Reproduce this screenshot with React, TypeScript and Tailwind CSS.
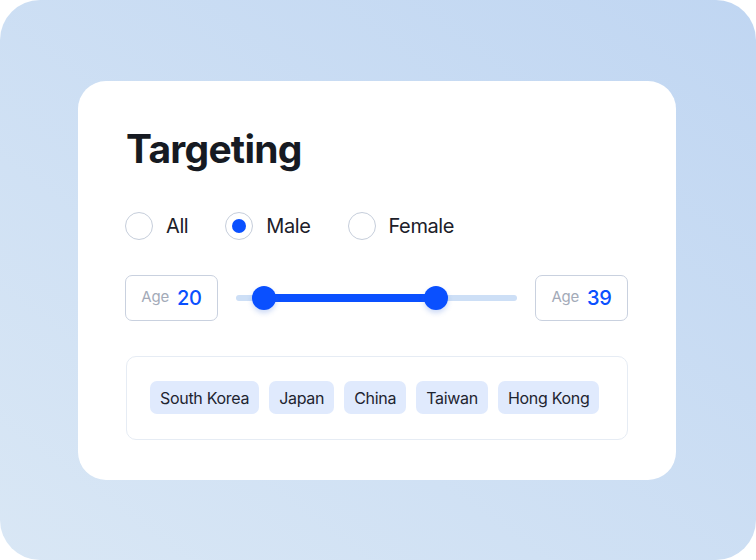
import React, { useState } from 'react';

const countries = ['South Korea', 'Japan', 'China', 'Taiwan', 'Hong Kong'];
const genders = ['All', 'Male', 'Female'];

const AgeBox: React.FC<{ value: number }> = ({ value }) => (
  <div className="w-[93px] h-[46px] shrink-0 rounded-[7px] border border-[#c9d1df] flex items-center justify-center gap-[8px]">
    <span className="text-[15px] text-[#a3aab8] tracking-[-0.2px]">Age</span>
    <span className="text-[20px] font-medium text-[#0a50ff] tracking-[-0.3px]">{value}</span>
  </div>
);

const App: React.FC = () => {
  const [gender, setGender] = useState('Male');
  // thumb positions as percent of the track
  const minPos = 9.8;
  const maxPos = 71.1;

  return (
    <div className="w-[756px] h-[560px] rounded-[40px] bg-linear-to-tr from-[#d9e7f5] to-[#c0d6f2] flex items-center pl-[78px] font-['Inter',sans-serif]">
      <div className="w-[598px] h-[399px] bg-white rounded-[28px] px-[48px] pt-[45px]">
        <h1 className="text-[39px] leading-[46px] font-bold text-[#161a22] tracking-[-0.75px]">Targeting</h1>

        {/* Gender */}
        <div className="mt-[40px] flex items-center gap-[37px] -ml-px">
          {genders.map((g) => (
            <button key={g} onClick={() => setGender(g)} className="flex items-center gap-[13px]">
              <span className="w-[28px] h-[28px] rounded-full border-[1.5px] border-[#c6cedb] flex items-center justify-center">
                {gender === g && <span className="w-[14px] h-[14px] rounded-full bg-[#0a50ff]" />}
              </span>
              <span className="text-[20px] leading-[28px] text-[#1c2029] tracking-[-0.4px]">{g}</span>
            </button>
          ))}
        </div>

        {/* Age range */}
        <div className="mt-[35px] flex items-center -ml-px">
          <AgeBox value={20} />
          <div className="flex-1 mx-[18px] relative h-[24px] flex items-center">
            <div className="w-full h-[6px] rounded-full bg-[#cddff6]" />
            <div
              className="absolute h-[8px] bg-[#0a50ff]"
              style={{ left: `${minPos}%`, width: `${maxPos - minPos}%` }}
            />
            <div
              className="absolute w-[24px] h-[24px] -ml-[12px] rounded-full bg-[#0a50ff] shadow-[0_3px_5px_rgba(60,110,220,0.25)]"
              style={{ left: `${minPos}%` }}
            />
            <div
              className="absolute w-[24px] h-[24px] -ml-[12px] rounded-full bg-[#0a50ff] shadow-[0_3px_5px_rgba(60,110,220,0.25)]"
              style={{ left: `${maxPos}%` }}
            />
          </div>
          <AgeBox value={39} />
        </div>

        {/* Countries */}
        <div className="mt-[35px] h-[84px] rounded-[10px] border border-[#e6ecf4] flex items-center gap-[10px] px-[23px]">
          {countries.map((c) => (
            <span key={c} className="h-[33px] px-[10px] rounded-[7px] bg-[#e0eafd] flex items-center whitespace-nowrap text-[16px] text-[#1e2430] tracking-[-0.3px]">
              {c}
            </span>
          ))}
        </div>
      </div>
    </div>
  );
};

export default App;
